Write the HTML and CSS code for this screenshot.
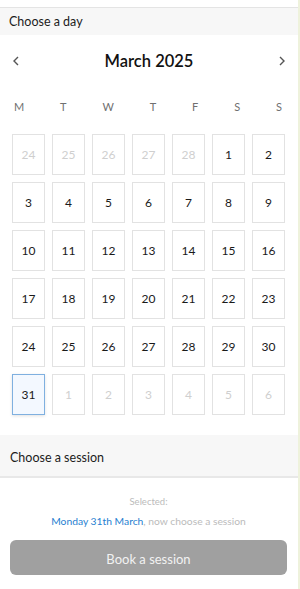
FILE: index.html
```html
<!DOCTYPE html>
<html lang="en">
<head>
  <meta charset="UTF-8" />
  <meta name="viewport" content="width=device-width, initial-scale=1.0"/>
  <title>Book a session</title>
  <link rel="stylesheet" href="styles.css">
</head>
<body>
  <div class="page">
    <div class="topbar"></div>

    <div class="section-head day-head">Choose a day</div>

    <div class="calendar">
      <div class="month-nav">
        <button class="arrow">
          <svg width="8" height="10" viewBox="0 0 8 10"><polyline points="6,1 2,5 6,9" fill="none" stroke="#555" stroke-width="1.4"/></svg>
        </button>
        <span class="month-title">March 2025</span>
        <button class="arrow">
          <svg width="8" height="10" viewBox="0 0 8 10"><polyline points="2,1 6,5 2,9" fill="none" stroke="#555" stroke-width="1.4"/></svg>
        </button>
      </div>

      <div class="weekdays">
        <span>M</span><span>T</span><span>W</span><span>T</span><span>F</span><span>S</span><span>S</span>
      </div>

      <div class="days">
        <div class="day off">24</div><div class="day off">25</div><div class="day off">26</div><div class="day off">27</div><div class="day off">28</div><div class="day">1</div><div class="day">2</div>
        <div class="day">3</div><div class="day">4</div><div class="day">5</div><div class="day">6</div><div class="day">7</div><div class="day">8</div><div class="day">9</div>
        <div class="day">10</div><div class="day">11</div><div class="day">12</div><div class="day">13</div><div class="day">14</div><div class="day">15</div><div class="day">16</div>
        <div class="day">17</div><div class="day">18</div><div class="day">19</div><div class="day">20</div><div class="day">21</div><div class="day">22</div><div class="day">23</div>
        <div class="day">24</div><div class="day">25</div><div class="day">26</div><div class="day">27</div><div class="day">28</div><div class="day">29</div><div class="day">30</div>
        <div class="day selected">31</div><div class="day off">1</div><div class="day off">2</div><div class="day off">3</div><div class="day off">4</div><div class="day off">5</div><div class="day off">6</div>
      </div>
    </div>

    <div class="section-head session-head">Choose a session</div>

    <div class="summary">
      <div class="selected-label">Selected:</div>
      <div class="selected-text"><span class="selected-date">Monday 31th March</span>, now choose a session</div>
      <button class="book-btn">Book a session</button>
    </div>
  </div>
</body>
</html>
```

FILE: styles.css
```css
body {
  margin: 0;
  background: #ffffff;
  font-family: Lato, "Open Sans", sans-serif;
  color: #222;
}

.page {
  width: 298px;
  height: 589px;
  border-right: 2px solid #eef2dc;
  overflow: hidden;
}

.topbar {
  height: 7px;
  border-bottom: 1px solid #e4e4e4;
  box-shadow: 0 1px 2px rgba(0, 0, 0, 0.04);
}

.section-head {
  background: #f7f7f7;
  font-size: 12.5px;
  color: #1c1c1c;
  padding-left: 9px;
  display: flex;
  align-items: center;
}

.day-head {
  height: 27px;
}

.calendar {
  padding: 0 13px 0 12px;
}

.month-nav {
  display: flex;
  justify-content: space-between;
  align-items: center;
  height: 20px;
  margin-top: 16px;
}

.arrow {
  background: none;
  border: none;
  padding: 0;
  width: 8px;
  height: 10px;
  display: flex;
  cursor: pointer;
}

.month-nav .arrow:last-child {
  margin-right: -1px;
}

.month-title {
  font-size: 16.5px;
  font-weight: 600;
  color: #111;
}

.weekdays {
  display: flex;
  justify-content: space-between;
  margin: 25px 3px 0 2px;
  height: 20px;
  align-items: center;
  font-size: 11px;
  color: #707070;
}

.days {
  display: grid;
  grid-template-columns: repeat(7, 33px);
  grid-auto-rows: 41px;
  gap: 7px;
  margin-top: 18px;
}

.day {
  border: 1px solid #e2e2e2;
  display: flex;
  align-items: center;
  justify-content: center;
  font-size: 12px;
  color: #1a1a1a;
}

.day.off {
  color: #cfcfcf;
}

.day.selected {
  border-color: #7fb0e0;
  background: #f3f8ff;
  box-shadow: 0 1px 3px rgba(0, 0, 0, 0.12);
}

.session-head {
  margin-top: 20px;
  height: 43px;
  padding-left: 10px;
  padding-top: 4px;
  box-sizing: border-box;
  border-bottom: 2px solid #e8e8e8;
}

.summary {
  padding: 18px 11px 0 10px;
  text-align: center;
  font-size: 10.3px;
  color: #bbbbbb;
}

.selected-label {
  line-height: 12px;
  font-size: 9.5px;
}

.selected-text {
  line-height: 12px;
  margin-top: 7px;
}

.selected-date {
  color: #1f7fd1;
}

.book-btn {
  display: block;
  width: 100%;
  height: 35px;
  margin-top: 13px;
  padding-top: 3px;
  border: none;
  border-radius: 6px;
  background: #a0a0a0;
  color: #f2f2f2;
  font-family: inherit;
  font-size: 13px;
}
```
